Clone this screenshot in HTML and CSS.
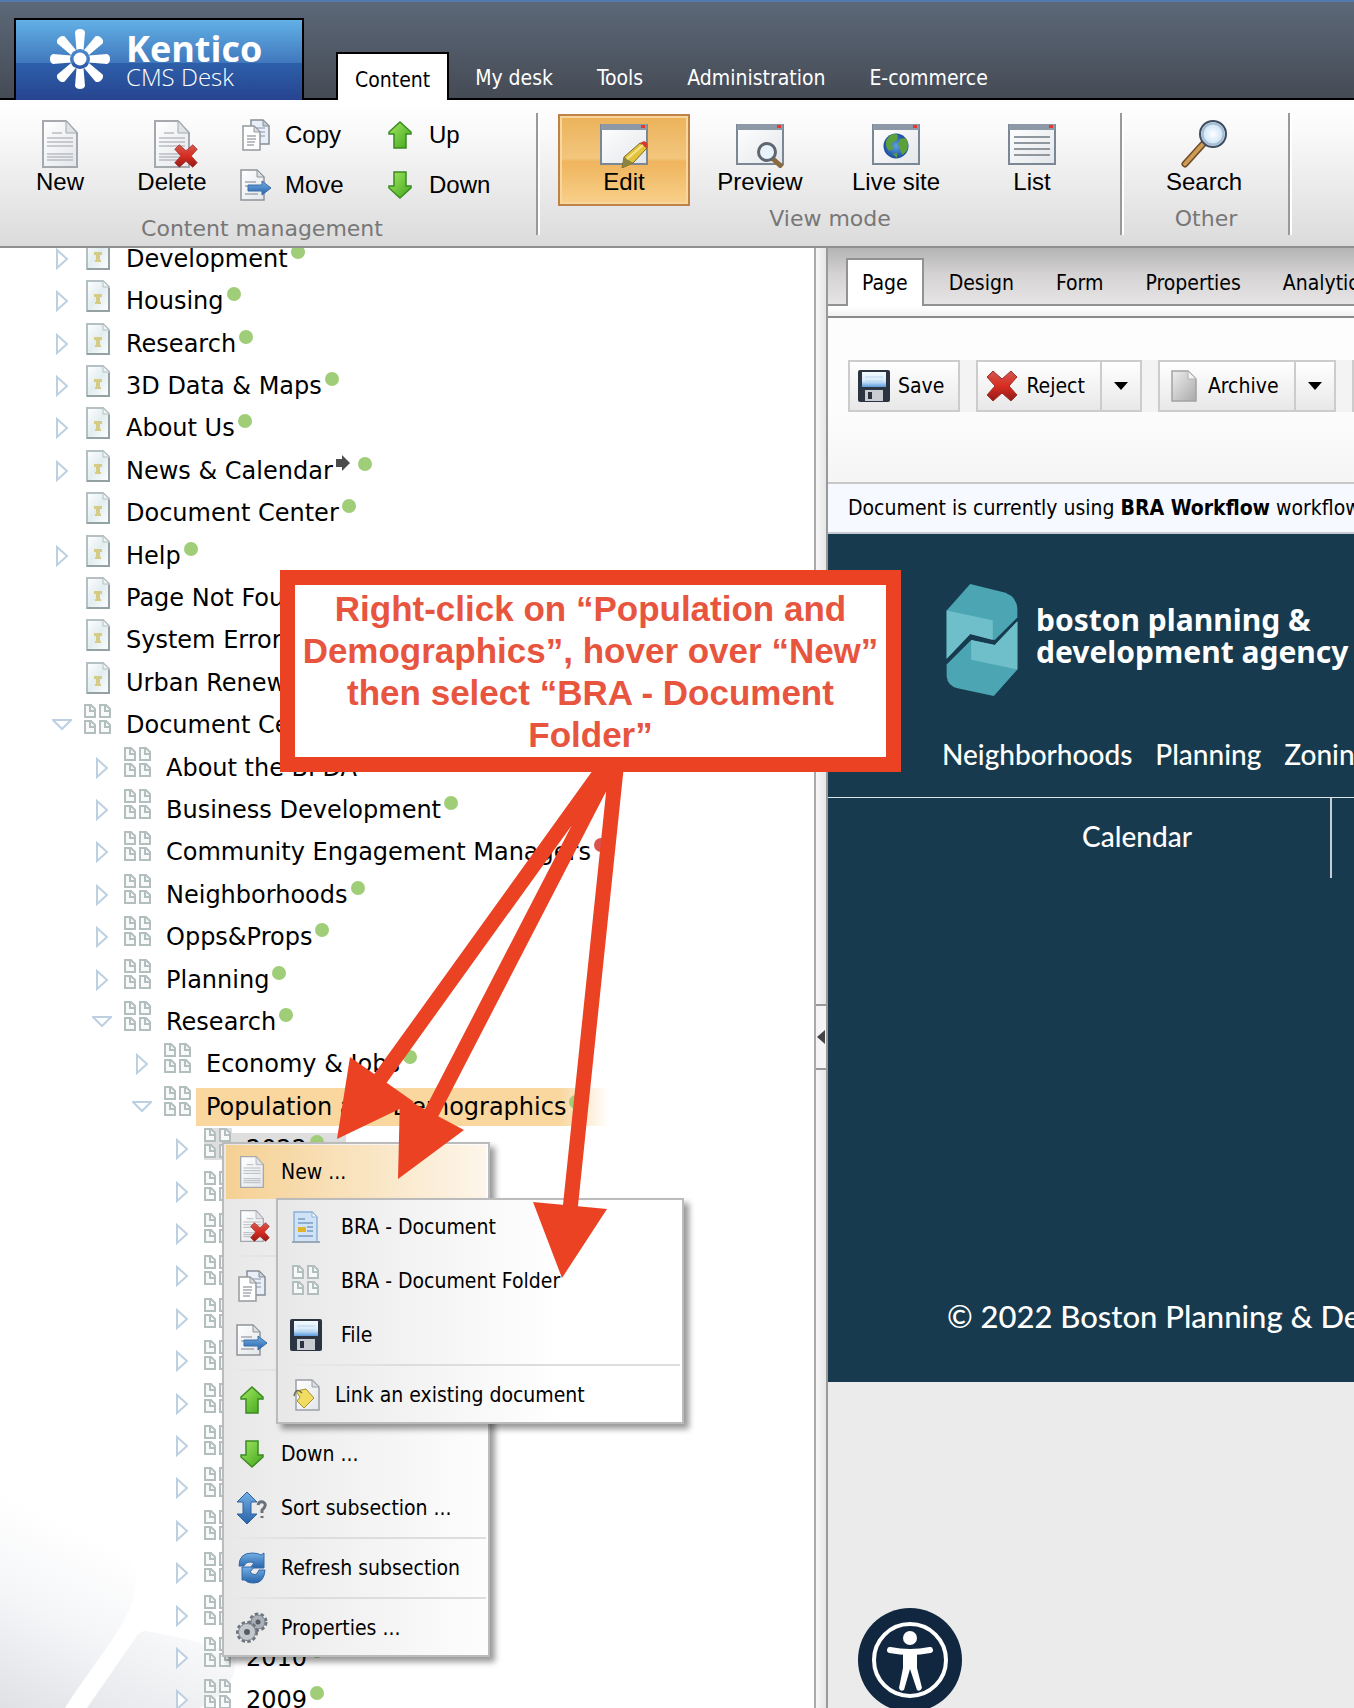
FILE: index.html
```html
<!DOCTYPE html>
<html lang="en">
<head>
<meta charset="utf-8">
<title>Kentico CMS Desk</title>
<link rel="stylesheet" href="styles.css">
</head>
<body>
<svg class="defs" width="0" height="0" aria-hidden="true">
  <defs>
    <linearGradient id="g-paper" x1="0" y1="0" x2="1" y2="1"><stop offset="0" stop-color="#fff"/><stop offset="1" stop-color="#e3e6ea"/></linearGradient>
    <linearGradient id="g-tpaper" x1="0" y1="0" x2="1" y2="1"><stop offset="0" stop-color="#fff"/><stop offset=".5" stop-color="#e2edf0"/><stop offset="1" stop-color="#fff"/></linearGradient>
    <linearGradient id="g-green" x1="0" y1="0" x2="1" y2="1"><stop offset="0" stop-color="#a4e860"/><stop offset="1" stop-color="#3fa51d"/></linearGradient>
    <linearGradient id="g-red" x1="0" y1="0" x2="0" y2="1"><stop offset="0" stop-color="#cf5a52"/><stop offset=".5" stop-color="#d92c20"/><stop offset="1" stop-color="#8f1c18"/></linearGradient>
    <linearGradient id="g-blue" x1="0" y1="0" x2="0" y2="1"><stop offset="0" stop-color="#74b0e6"/><stop offset="1" stop-color="#2763a8"/></linearGradient>
    <linearGradient id="g-disk" x1="0" y1="0" x2="0" y2="1"><stop offset="0" stop-color="#f4faff"/><stop offset=".6" stop-color="#d6eafc"/><stop offset="1" stop-color="#5b9bdc"/></linearGradient>
    <linearGradient id="g-grey" x1="0" y1="0" x2="1" y2="1"><stop offset="0" stop-color="#eee"/><stop offset="1" stop-color="#aaa"/></linearGradient>
    <radialGradient id="g-globe"><stop offset="0" stop-color="#5da0e6"/><stop offset="1" stop-color="#1c4c9c"/></radialGradient>
    <radialGradient id="g-lens"><stop offset="0" stop-color="#fff"/><stop offset="1" stop-color="#bcdcf6"/></radialGradient>
    <linearGradient id="g-swoop" x1="0.300" y1="0" x2="0" y2="1"><stop offset=".1" stop-color="#fff"/><stop offset=".5" stop-color="#f5f6f8"/><stop offset="1" stop-color="#dfe1e5"/></linearGradient>
    <linearGradient id="g-swoop2" x1="1" y1="0" x2="0" y2="1"><stop offset="0" stop-color="#fdfdfe"/><stop offset="1" stop-color="#e6e8eb"/></linearGradient>
  </defs>
  <symbol id="doc" viewBox="0 0 36 48">
    <path d="M1 1H24L35 13V47H1Z" fill="url(#g-paper)" stroke="#a5a9ae" stroke-width="2"/>
    <path d="M24 1V13H35Z" fill="#dfe2e6" stroke="#a5a9ae"/>
    <path d="M10 13H20M5 18H31M5 22H31M5 26H31M5 34H31M5 37H31M5 40H31" stroke="#b9bcc1" stroke-width="1.5"/>
  </symbol>
  <symbol id="cross" viewBox="0 0 32 32">
    <path d="M7 1L16 9L25 1L31 7L23 16L31 25L25 31L16 23L7 31L1 25L9 16L1 7Z" fill="url(#g-red)" stroke="#a03028"/>
  </symbol>
  <symbol id="copy" viewBox="0 0 28 32">
    <path d="M9 1H21L27 7V25H9Z" fill="#e9eff8" stroke="#878d95" stroke-width="1.5"/>
    <path d="M21 1V7H27Z" fill="#c8ced6" stroke="#878d95"/>
    <path d="M13 9H23M13 13H23M13 17H23" stroke="#aab4c2" stroke-width="1.5"/>
    <path d="M1 7H12L18 13V31H1Z" fill="#fff" stroke="#969a9f" stroke-width="1.5"/>
    <path d="M12 7V13H18Z" fill="#ddd" stroke="#969a9f"/>
    <path d="M5 17H14M5 20H14M5 23H13M5 26H12" stroke="#a5a9ae" stroke-width="1.3"/>
  </symbol>
  <symbol id="move" viewBox="0 0 32 32">
    <path d="M1 1H17L24 8V31H1Z" fill="url(#g-paper)" stroke="#8f9499" stroke-width="1.5"/>
    <path d="M17 1V8H24Z" fill="#ddd" stroke="#8f9499"/>
    <path d="M5 13H16M5 17H10M5 25H18" stroke="#a5a9ae" stroke-width="1.3"/>
    <path d="M8 16H22V12L31 19L22 26V22H8Z" fill="url(#g-blue)" stroke="#3a6ca8"/>
  </symbol>
  <symbol id="up" viewBox="0 0 24 28">
    <path d="M12 1L23 11V13H18V27H6V13H1V11Z" fill="url(#g-green)" stroke="#3b8a22" stroke-width="1.5"/>
  </symbol>
  <symbol id="down" viewBox="0 0 24 28">
    <path d="M12 27L23 17V15H18V1H6V15H1V17Z" fill="url(#g-green)" stroke="#3b8a22" stroke-width="1.5"/>
  </symbol>
  <symbol id="win" viewBox="0 0 48 48">
    <rect x="1" y="5" width="46" height="39" fill="url(#g-paper)" stroke="#7b8794" stroke-width="2"/>
    <path d="M1 4H47V10H1Z" fill="#8d99a6"/>
    <rect x="41" y="5" width="4" height="3" fill="#e03c32"/>
  </symbol>
  <symbol id="edit" viewBox="0 0 48 48">
    <use href="#win"/>
    <path d="M22 48L24 37L40 23L47 28L33 43Z" fill="#e3c23c" stroke="#7d6620"/>
    <path d="M40 23L44 21Q49 23 47 28Z" fill="#d5382c"/>
    <path d="M22 48L24 37L33 43Z" fill="#8a8440"/>
    <path d="M27 39L43 25" stroke="#f6e58c" stroke-width="2"/>
  </symbol>
  <symbol id="preview" viewBox="0 0 48 48">
    <use href="#win"/>
    <path d="M36 38L46 47" stroke="#8a6a3c" stroke-width="5"/>
    <circle cx="31" cy="32" r="8.500" fill="#e8f2fa" stroke="#5e6670" stroke-width="3"/>
  </symbol>
  <symbol id="live" viewBox="0 0 48 48">
    <use href="#win"/>
    <circle cx="24" cy="26" r="12.500" fill="url(#g-globe)"/>
    <path d="M15 19Q20 12 26 15L25 20L20 23L21 29L17 31Q12 25 15 19ZM28 19L34 18Q38 25 34 32L30 35L28 29L26 24ZM21 34L25 33L25 38Z" fill="#5ca03c"/>
  </symbol>
  <symbol id="list" viewBox="0 0 48 48">
    <use href="#win"/>
    <path d="M6 17H42M6 23H42M6 29H42M6 35H42" stroke="#8f989f" stroke-width="2"/>
  </symbol>
  <symbol id="search" viewBox="0 0 48 48">
    <path d="M5 44L24 23" stroke="#6b4a24" stroke-width="7" stroke-linecap="round"/>
    <path d="M5 44L23 24" stroke="#cf9a55" stroke-width="4" stroke-linecap="round"/>
    <circle cx="33" cy="14" r="13" fill="url(#g-lens)" stroke="#3d4c5e" stroke-width="2"/>
    <circle cx="33" cy="14" r="10.500" fill="none" stroke="#a9bccd" stroke-width="2"/>
  </symbol>
  <symbol id="tdoc" viewBox="0 0 24 32">
    <path d="M1 1H17L23 7V31H1Z" fill="url(#g-tpaper)" stroke="#b4c0c3" stroke-width="2"/>
    <path d="M1 31H23V8" fill="none" stroke="#95a2a4" stroke-width="2"/>
    <path d="M17 1V7H23Z" fill="#eef3f4" stroke="#b4c0c3"/>
    <path d="M8 14H16V17H14V22H15V24H9V22H10V17H8Z" fill="#d6cb84"/>
  </symbol>
  <symbol id="leaf" viewBox="0 0 12 14"><path d="M1 1H7L11 5V13H1Z" fill="#f8fafa" stroke="#b3bebe" stroke-width="2"/><path d="M6 1V7H11" fill="none" stroke="#b3bebe" stroke-width="2"/></symbol>
  <symbol id="folder" viewBox="0 0 28 32">
    <use href="#leaf" x="0" y="0" width="12" height="14"/><use href="#leaf" x="15" y="0" width="12" height="14"/>
    <use href="#leaf" x="0" y="16" width="12" height="14"/><use href="#leaf" x="15" y="16" width="12" height="14"/>
  </symbol>
  <symbol id="closed" viewBox="0 0 20 22"><path d="M5 2L15 11L5 20Z" fill="#fff" stroke="#bdd0e2" stroke-width="2"/></symbol>
  <symbol id="open" viewBox="0 0 20 22"><path d="M1 6H19L10 15Z" fill="#fff" stroke="#bdd0e2" stroke-width="2"/></symbol>
  <symbol id="disk" viewBox="0 0 32 32">
    <rect width="32" height="32" rx="2" fill="#2b3440"/><rect x="4" y="2" width="24" height="15" fill="url(#g-disk)"/>
    <path d="M7 7H25M7 11H25" stroke="#b8d4ec"/><rect x="7" y="20" width="18" height="11" fill="#c9cdd2"/><rect x="10" y="22" width="4" height="7" fill="#2b3440"/>
  </symbol>
  <symbol id="archive" viewBox="0 0 26 32"><path d="M1 1H17L25 9V31H1Z" fill="url(#g-grey)" stroke="#a2a2a2" stroke-width="1.500"/><path d="M17 1V9H25Z" fill="#f4f4f4" stroke="#b0b0b0"/></symbol>
  <symbol id="bdoc" viewBox="0 0 30 32">
    <path d="M3 1H21L26 6V31H3Z" fill="#cfe2f6" stroke="#8fb2d8" stroke-width="1.500"/><path d="M1 31H29" stroke="#9aa9b8" stroke-width="2"/>
    <path d="M7 8H14M7 12H22M16 16H22M16 20H22M7 25H22" stroke="#7a9cc2" stroke-width="1.500"/><rect x="7" y="16" width="8" height="5" fill="#dfb52a"/><path d="M21 1V6H26Z" fill="#fff" stroke="#8fb2d8"/>
  </symbol>
  <symbol id="link" viewBox="0 0 28 32">
    <path d="M4 1H20L27 8V31H4Z" fill="url(#g-paper)" stroke="#9aa0a8" stroke-width="1.500"/><path d="M20 1V8H27Z" fill="#ddd" stroke="#9aa0a8"/>
    <path d="M4 12L14 10L22 19L12 29L5 22L8 18Z" fill="#f1dc62" stroke="#a8902c"/><path d="M2 17Q4 8 10 14" fill="none" stroke="#6b6b55" stroke-width="1.500"/>
  </symbol>
  <symbol id="sort" viewBox="0 0 32 32">
    <path d="M11 0L21 10H15V22H21L11 32L1 22H7V10H1Z" fill="url(#g-blue)" stroke="#2f62a0"/>
    <path d="M22 13Q23 9 27 10Q31 12 28 16L26 18V21M26 24V26" fill="none" stroke="#6b7078" stroke-width="3"/>
  </symbol>
  <symbol id="refresh" viewBox="0 0 28 32">
    <path d="M1 14Q1 1 14 1Q20 1 23 3L26 1V16H12L16 11Q9 8 6 14Z" fill="url(#g-blue)" stroke="#3468a6"/>
    <path d="M27 18Q26 31 16 31Q9 31 7 28L4 28V15H16L12 20Q18 26 21 18Z" fill="url(#g-blue)" stroke="#3468a6"/>
  </symbol>
  <symbol id="gears" viewBox="0 0 32 32">
    <circle cx="22" cy="10" r="7" fill="#aab0b8" stroke="#6d747d" stroke-width="5" stroke-dasharray="3 2"/><circle cx="22" cy="10" r="7" fill="#aab0b8" stroke="#7c838c"/><circle cx="22" cy="10" r="2.500" fill="#565c64"/>
    <circle cx="11" cy="20" r="8.500" fill="#c2c7cd" stroke="#6d747d" stroke-width="5" stroke-dasharray="3 2"/><circle cx="11" cy="20" r="8.500" fill="#c2c7cd" stroke="#7c838c"/><circle cx="11" cy="20" r="3" fill="#565c64"/>
  </symbol>
  <symbol id="redirect" viewBox="0 0 14 16"><path d="M0 4H6V0L14 8L6 16V12H0Z" fill="#4c4c4c"/></symbol>
</svg>

<div class="desk">
<header class="top">
  <a class="brand" href="#">
    <svg class="star" viewBox="-30 -30 60 60" fill="#fff" aria-hidden="true">
      <g id="petals"><path id="petal" d="M-3.500 -9Q0 -11 3.500 -9L5 -27Q4 -30 0 -30Q-4 -30 -5 -27Z"/><use href="#petal" transform="rotate(45)"/><use href="#petal" transform="rotate(90)"/><use href="#petal" transform="rotate(135)"/></g>
      <use href="#petals" transform="rotate(180)"/><circle r="6.500"/>
    </svg>
    <span class="brand-text"><b>Kentico</b><span>CMS Desk</span></span>
  </a>
  <nav class="main-tabs">
    <a class="active" href="#">Content</a><a href="#">My desk</a><a href="#">Tools</a><a href="#">Administration</a><a href="#">E-commerce</a>
  </nav>
</header>

<div class="ribbon">
  <section class="group manage">
    <div class="tools">
      <button class="big narrow"><svg class="page"><use href="#doc"/></svg>New</button>
      <button class="big narrow"><span class="stack"><svg class="page"><use href="#doc"/></svg><svg class="badge"><use href="#cross"/></svg></span>Delete</button>
      <div class="small-col">
        <button class="small"><svg><use href="#copy"/></svg>Copy</button>
        <button class="small"><svg class="wide"><use href="#move"/></svg>Move</button>
      </div>
      <div class="small-col">
        <button class="small"><svg class="arr"><use href="#up"/></svg>Up</button>
        <button class="small"><svg class="arr"><use href="#down"/></svg>Down</button>
      </div>
    </div>
    <h2>Content management</h2>
  </section>
  <span class="sep"></span>
  <section class="group view">
    <div class="tools">
      <button class="big on"><svg><use href="#edit"/></svg>Edit</button>
      <button class="big"><svg><use href="#preview"/></svg>Preview</button>
      <button class="big"><svg><use href="#live"/></svg>Live site</button>
      <button class="big"><svg><use href="#list"/></svg>List</button>
    </div>
    <h2>View mode</h2>
  </section>
  <span class="sep"></span>
  <section class="group other">
    <div class="tools"><button class="big"><svg><use href="#search"/></svg>Search</button></div>
    <h2>Other</h2>
  </section>
  <span class="sep"></span>
</div>

<main class="work">
  <aside class="tree-pane">
    <svg class="swoop" viewBox="0 0 240 220" aria-hidden="true">
      <path d="M0 0C70 5 136 40 136 92C136 130 100 165 65 220H0Z" fill="url(#g-swoop)"/>
      <path d="M145 143Q139 143 134 152L87 220H200Q240 200 235 165Q190 150 145 143Z" fill="url(#g-swoop2)"/>
    </svg>
    <ul class="tree">
      <li><svg class="tw"><use href="#closed"/></svg><svg class="ic"><use href="#tdoc"/></svg><a href="#">Development<i></i></a></li>
      <li><svg class="tw"><use href="#closed"/></svg><svg class="ic"><use href="#tdoc"/></svg><a href="#">Housing<i></i></a></li>
      <li><svg class="tw"><use href="#closed"/></svg><svg class="ic"><use href="#tdoc"/></svg><a href="#">Research<i></i></a></li>
      <li><svg class="tw"><use href="#closed"/></svg><svg class="ic"><use href="#tdoc"/></svg><a href="#">3D Data &amp; Maps<i></i></a></li>
      <li><svg class="tw"><use href="#closed"/></svg><svg class="ic"><use href="#tdoc"/></svg><a href="#">About Us<i></i></a></li>
      <li><svg class="tw"><use href="#closed"/></svg><svg class="ic"><use href="#tdoc"/></svg><a href="#">News &amp; Calendar<svg class="redir"><use href="#redirect"/></svg><i></i></a></li>
      <li><svg class="tw"></svg><svg class="ic"><use href="#tdoc"/></svg><a href="#">Document Center<i></i></a></li>
      <li><svg class="tw"><use href="#closed"/></svg><svg class="ic"><use href="#tdoc"/></svg><a href="#">Help<i></i></a></li>
      <li><svg class="tw"></svg><svg class="ic"><use href="#tdoc"/></svg><a href="#">Page Not Found</a></li>
      <li><svg class="tw"></svg><svg class="ic"><use href="#tdoc"/></svg><a href="#">System Error</a></li>
      <li><svg class="tw"></svg><svg class="ic"><use href="#tdoc"/></svg><a href="#">Urban Renewal</a></li>
      <li><svg class="tw"><use href="#open"/></svg><svg class="ic"><use href="#folder"/></svg><a href="#">Document Center</a></li>
      <li class="l2"><svg class="tw"><use href="#closed"/></svg><svg class="ic"><use href="#folder"/></svg><a href="#">About the BPDA</a></li>
      <li class="l2"><svg class="tw"><use href="#closed"/></svg><svg class="ic"><use href="#folder"/></svg><a href="#">Business Development<i></i></a></li>
      <li class="l2"><svg class="tw"><use href="#closed"/></svg><svg class="ic"><use href="#folder"/></svg><a href="#">Community Engagement Managers<i class="red"></i></a></li>
      <li class="l2"><svg class="tw"><use href="#closed"/></svg><svg class="ic"><use href="#folder"/></svg><a href="#">Neighborhoods<i></i></a></li>
      <li class="l2"><svg class="tw"><use href="#closed"/></svg><svg class="ic"><use href="#folder"/></svg><a href="#">Opps&amp;Props<i></i></a></li>
      <li class="l2"><svg class="tw"><use href="#closed"/></svg><svg class="ic"><use href="#folder"/></svg><a href="#">Planning<i></i></a></li>
      <li class="l2"><svg class="tw"><use href="#open"/></svg><svg class="ic"><use href="#folder"/></svg><a href="#">Research<i></i></a></li>
      <li class="l3"><svg class="tw"><use href="#closed"/></svg><svg class="ic"><use href="#folder"/></svg><a href="#">Economy &amp; Jobs<i></i></a></li>
      <li class="l3 selected"><svg class="tw"><use href="#open"/></svg><svg class="ic"><use href="#folder"/></svg><a href="#">Population and Demographics<i></i></a></li>
      <li class="l4 hover"><svg class="tw"><use href="#closed"/></svg><svg class="ic"><use href="#folder"/></svg><a href="#">2022<i></i></a></li>
      <li class="l4"><svg class="tw"><use href="#closed"/></svg><svg class="ic"><use href="#folder"/></svg><a href="#">2021<i></i></a></li>
      <li class="l4"><svg class="tw"><use href="#closed"/></svg><svg class="ic"><use href="#folder"/></svg><a href="#">2020<i></i></a></li>
      <li class="l4"><svg class="tw"><use href="#closed"/></svg><svg class="ic"><use href="#folder"/></svg><a href="#">2019<i></i></a></li>
      <li class="l4"><svg class="tw"><use href="#closed"/></svg><svg class="ic"><use href="#folder"/></svg><a href="#">2018<i></i></a></li>
      <li class="l4"><svg class="tw"><use href="#closed"/></svg><svg class="ic"><use href="#folder"/></svg><a href="#">2017<i></i></a></li>
      <li class="l4"><svg class="tw"><use href="#closed"/></svg><svg class="ic"><use href="#folder"/></svg><a href="#">2016<i></i></a></li>
      <li class="l4"><svg class="tw"><use href="#closed"/></svg><svg class="ic"><use href="#folder"/></svg><a href="#">2015<i></i></a></li>
      <li class="l4"><svg class="tw"><use href="#closed"/></svg><svg class="ic"><use href="#folder"/></svg><a href="#">2014<i></i></a></li>
      <li class="l4"><svg class="tw"><use href="#closed"/></svg><svg class="ic"><use href="#folder"/></svg><a href="#">2013<i></i></a></li>
      <li class="l4"><svg class="tw"><use href="#closed"/></svg><svg class="ic"><use href="#folder"/></svg><a href="#">2012<i></i></a></li>
      <li class="l4"><svg class="tw"><use href="#closed"/></svg><svg class="ic"><use href="#folder"/></svg><a href="#">2011<i></i></a></li>
      <li class="l4"><svg class="tw"><use href="#closed"/></svg><svg class="ic"><use href="#folder"/></svg><a href="#">2010<i></i></a></li>
      <li class="l4"><svg class="tw"><use href="#closed"/></svg><svg class="ic"><use href="#folder"/></svg><a href="#">2009<i></i></a></li>
    </ul>
  </aside>
  <div class="splitter"><button aria-label="Collapse tree"><svg viewBox="0 0 8 14"><path d="M8 0V14L0 7Z" fill="#444"/></svg></button></div>
  <section class="editor">
    <nav class="doc-tabs"><a class="active" href="#">Page</a><a href="#">Design</a><a href="#">Form</a><a href="#">Properties</a><a href="#">Analytics</a></nav>
    <div class="strip"></div>
    <div class="actions">
      <div class="action-row">
        <button class="act save"><svg><use href="#disk"/></svg>Save</button>
        <div class="split"><button class="act"><svg><use href="#cross"/></svg>Reject</button><button class="more" aria-label="Reject options"></button></div>
        <div class="split"><button class="act"><svg><use href="#archive"/></svg>Archive</button><button class="more arch" aria-label="Archive options"></button></div>
        <button class="act next" aria-label="More actions"></button>
      </div>
    </div>
    <p class="info">Document is currently using <b>BRA Workflow</b> workflow.</p>
    <div class="site">
      <header class="site-head">
        <a class="bpda" href="#">
          <svg viewBox="0 0 72 114" aria-hidden="true">
            <path d="M24 0L60 9Q72 14 72 26V34L49 57L24 51L0 76V27Z" fill="#4ba5b3"/>
            <path d="M0 27L47 37V57L24 51L0 76Z" fill="#6fbfca"/>
            <path d="M72 38L49 62L25 57L0 82V94Q1 104 11 106L48 114L72 87Z" fill="#4ba5b3"/>
            <path d="M72 38L49 62L25 57V77L72 87Z" fill="#6fbfca"/>
          </svg>
          <span>boston planning &amp;<br>development agency</span>
        </a>
        <nav class="site-nav"><a href="#">Neighborhoods</a><a href="#">Planning</a><a href="#">Zoning</a></nav>
      </header>
      <nav class="site-sub"><a href="#">Calendar</a><a href="#"></a></nav>
      <footer>© 2022 Boston Planning &amp; Development Agency</footer>
    </div>
    <button class="a11y" aria-label="Accessibility menu">
      <svg viewBox="0 0 104 104" fill="none" stroke="#fff"><circle cx="52" cy="52" r="36" stroke-width="4"/><circle cx="52" cy="30" r="7" fill="#fff" stroke="none"/><path d="M32 42Q52 46 72 42" stroke-width="6" stroke-linecap="round"/><path d="M45 43H59V60L64 80Q62 84 59 82L52 61L46 82Q42 84 41 80L45 60Z" fill="#fff" stroke="none"/></svg>
    </button>
  </section>
</main>

<div class="menu context" role="menu">
  <button class="item hot" role="menuitem"><svg class="p"><use href="#doc"/></svg>New ...</button>
  <button class="item" role="menuitem"><span class="stack mini"><svg class="p"><use href="#doc"/></svg><svg class="badge"><use href="#cross"/></svg></span>Delete</button>
  <hr>
  <button class="item" role="menuitem"><svg><use href="#copy"/></svg>Copy ...</button>
  <button class="item" role="menuitem"><svg><use href="#move"/></svg>Move ...</button>
  <hr>
  <button class="item" role="menuitem"><svg class="a"><use href="#up"/></svg>Up ...</button>
  <button class="item" role="menuitem"><svg class="a"><use href="#down"/></svg>Down ...</button>
  <button class="item" role="menuitem"><svg><use href="#sort"/></svg>Sort subsection ...</button>
  <hr>
  <button class="item" role="menuitem"><svg><use href="#refresh"/></svg>Refresh subsection</button>
  <hr>
  <button class="item" role="menuitem"><svg><use href="#gears"/></svg>Properties ...</button>
</div>
<div class="menu sub" role="menu">
  <button class="item" role="menuitem"><svg><use href="#bdoc"/></svg>BRA - Document</button>
  <button class="item" role="menuitem"><svg><use href="#folder"/></svg>BRA - Document Folder</button>
  <button class="item" role="menuitem"><svg><use href="#disk"/></svg>File</button>
  <hr>
  <button class="item tight" role="menuitem"><svg><use href="#link"/></svg>Link an existing document</button>
</div>

<svg class="arrows" width="420" height="560" viewBox="280 740 420 560" aria-hidden="true">
  <g stroke="#eb4224" stroke-width="15"><path d="M608 762L380 1079M616 756L431 1114M617 760L570 1210"/></g>
  <path d="M337 1139L350 1057L414 1102ZM398 1179L400 1096L464 1130ZM562 1278L533 1202L607 1209Z" fill="#eb4224"/>
</svg>
<p class="callout">Right-click on “Population and Demographics”, hover over “New” then select “BRA - Document Folder”</p>
</div>
</body>
</html>
```
FILE: styles.css
```css
* { box-sizing: border-box; }
body { margin: 0; background: #fff; color: #000; font: 21px "DejaVu Sans Condensed", "DejaVu Sans", sans-serif; }
a { color: inherit; text-decoration: none; }
button { margin: 0; padding: 0; border: 0; background: none; color: inherit; font: inherit; }
p, h2 { margin: 0; }
svg { display: block; flex: none; }
.defs { position: absolute; }
.desk { position: relative; display: flex; flex-direction: column; height: 100vh; overflow: hidden; }

/* Header */
.top { display: flex; align-items: flex-end; height: 100px; padding-left: 14px; border-top: 2px solid #5379ad; background: linear-gradient(#5c6878, #454b55 96px, #000 96px); }
.brand { display: flex; gap: 16px; width: 290px; height: 82px; padding: 9px 0 0 34px; border: 2px solid #000; border-bottom: 0; color: #fff; font-family: "Open Sans", "Noto Sans", sans-serif;
  background: linear-gradient(#62b0e6, #4078bd 43px, #2d5fa9 43px, #27438f 81px); }
.star { width: 60px; height: 60px; }
.brand-text { display: flex; flex-direction: column; }
.brand-text b { font-size: 36px; line-height: 40px; }
.brand-text span { font-size: 24px; line-height: 16px; font-weight: 300; }
.main-tabs { display: flex; align-items: flex-end; margin-left: 32px; color: #fff; }
.main-tabs a { height: 44px; padding: 0 22px; line-height: 44px; }
.main-tabs .active { height: 48px; margin-right: 4px; padding: 0 17px; border: 2px solid #000; border-bottom: 0; background: #fff; color: #000; line-height: 52px; }

/* Ribbon */
.ribbon { display: flex; flex: none; border-bottom: 2px solid #8f8f8f; background: linear-gradient(#fff, #fafafa 20%, #dbdbdb); }
.group { padding: 14px 0 6px; font-family: "Liberation Sans", Arial, sans-serif; font-size: 24px; }
.group h2 { margin-top: 2px; color: #777; font: 22px/22px "DejaVu Sans", sans-serif; text-align: center; }
.manage { width: 536px; }
.manage h2 { margin-top: 12px; padding-right: 12px; }
.view { width: 580px; }
.other { width: 164px; }
.tools { display: flex; justify-content: center; gap: 4px; height: 92px; padding-right: 4px; }
.manage .tools { justify-content: flex-start; gap: 0; padding: 0 0 0 4px; }
.sep { width: 4px; margin: 13px 0 11px; border-left: 2px solid #999; border-right: 2px solid #fff; }
.big { display: flex; flex-direction: column; align-items: center; gap: 2px; width: 132px; height: 92px; padding-top: 4px; border: 2px solid transparent; line-height: 24px; }
.big > svg { width: 48px; height: 48px; }
.big > .page, .stack .page { width: 36px; height: 48px; }
.narrow { width: 112px; }
.on { border-color: #bf8347; background: linear-gradient(#ecb25a, #f2c67d 48%, #efb45c 52%, #f8d08b); box-shadow: inset 0 0 0 2px #f8d69c; }
.stack { position: relative; display: block; width: 36px; height: 48px; }
.stack .badge { position: absolute; right: -8px; bottom: 0; width: 24px; height: 24px; }
.small-col { display: flex; flex-direction: column; gap: 8px; width: 144px; margin-left: 14px; }
.small-col + .small-col { margin-left: 0; }
.small { display: flex; align-items: center; gap: 15px; height: 42px; }
.small svg { width: 28px; height: 32px; }
.small .wide { width: 32px; margin: 0 -2px; }
.small .arr { height: 28px; }

/* Work area */
.work { display: flex; flex: 1; min-height: 0; }
.tree-pane { position: relative; flex: 0 0 60.12%; overflow: hidden; }
.swoop { position: absolute; left: 0; bottom: 0; width: 240px; height: 220px; }
.tree { position: relative; display: grid; grid-auto-rows: 42px 43px 42px 42px 43px; margin: -10px 0 0; padding: 0; list-style: none; font: 24px/42px "DejaVu Sans", sans-serif; white-space: nowrap; }
.tree li { display: flex; align-items: flex-start; padding-left: 52px; }
.tree .l2 { padding-left: 92px; }
.tree .l3 { padding-left: 132px; }
.tree .l4 { padding-left: 172px; }
.tw { width: 20px; height: 22px; margin: 10px 12px 0 0; }
.ic { width: 28px; height: 32px; margin-right: 4px; }
.tree a { display: flex; padding-left: 10px; }
.tree i { width: 14px; height: 14px; margin: 7px 0 0 3px; border-radius: 50%; background: #a0cd78; }
.tree .red { background: #d9534f; }
.redir { width: 14px; height: 16px; margin: 5px 5px 0 3px; }
.selected a { height: 38px; margin-top: 2px; padding-right: 26px; line-height: 38px; background: linear-gradient(90deg, #f9d79f 88%, transparent); }
.hover .ic { background: #dedede; }
.hover a { height: 32px; margin: 5px 0 0 -4px; padding: 0 22px 0 14px; line-height: 32px; background: #dedede; }
.hover i { margin-top: 2px; }
.splitter { display: flex; align-items: center; flex: 0 0 14px; border: solid #999; border-width: 0 2px 0 2px; border-left-color: #aaa; background: linear-gradient(90deg, #f6f6f6, #e6e6e6); }
.splitter button { display: flex; align-items: center; justify-content: center; width: 10px; height: 66px; margin-top: 118px; border: solid #999; border-width: 2px 0; background: #f4f4f4; }
.splitter svg { width: 8px; height: 14px; }

/* Editor */
.editor { position: relative; display: flex; flex-direction: column; flex: 1; min-width: 0; overflow: hidden; background: #ebebeb; white-space: nowrap; }
.doc-tabs { display: flex; align-items: flex-end; flex: none; height: 58px; padding-left: 18px; background: linear-gradient(#b4b4b4, #d4d2d2 45%, #e6e4e4 56px, #929292 56px); }
.doc-tabs a { padding: 0 21px; line-height: 38px; height: 42px; }
.doc-tabs .active { height: 48px; margin-right: 4px; padding: 0 14px; border: 2px solid #929292; border-bottom: 0; background: #fff; line-height: 46px; }
.strip { flex: none; height: 12px; border-bottom: 2px solid #8a8a8a; background: linear-gradient(#fff, #f2f2f2); }
.actions { flex: none; padding: 42px 0 70px 20px; border-bottom: 2px solid #c8c8c8; background: linear-gradient(#fdfdfd 50%, #f5f5f5); }
.action-row { display: flex; gap: 16px; background: #f3f3f3; }
.act, .more { display: flex; align-items: center; height: 52px; border: 2px solid #ccc; background: linear-gradient(#fff, #e8e8e8); }
.act { gap: 8px; padding: 0 14px 0 8px; }
.act svg { width: 32px; height: 32px; }
.split { display: flex; }
.split .act { padding-right: 15px; }
.more { justify-content: center; width: 42px; margin-left: -2px; }
.more::before { content: ""; border: 7px solid transparent; border-top: 8px solid #000; border-bottom: 0; }
.next { width: 60px; flex: none; }
.info { flex: none; height: 50px; padding-left: 20px; border-bottom: 2px solid #c5ccd3; background: #f6f9ff; line-height: 48px; }
.site { display: flex; flex-direction: column; flex: none; height: 848px; background: #173a4e; color: #fff; font-family: Lato, "Noto Sans", sans-serif; font-size: 28px; font-weight: 500; }
.site-head { padding: 50px 0 0 114px; border-bottom: 1px solid #dfe6ea; }
.bpda { display: flex; gap: 18px; margin-left: 4px; font: 700 30px/32px "Noto Sans", sans-serif; }
.bpda svg { width: 72px; height: 112px; }
.bpda span { padding-top: 20px; }
.site-nav { display: flex; gap: 23px; margin-top: 38px; padding-bottom: 23px; line-height: 40px; }
.site-sub { display: flex; line-height: 76px; }
.site-sub a:first-child { width: 504px; height: 80px; padding-left: 116px; border-right: 2px solid #c5ced3; text-align: center; }
footer { margin-top: auto; padding: 0 0 44px 119px; font-size: 31px; line-height: 44px; }
.a11y { position: absolute; left: 30px; bottom: -4px; width: 104px; height: 104px; border-radius: 50%; background: #11263f; }

/* Context menus */
.menu { position: absolute; border: 2px solid #bbb; background: linear-gradient(90deg, #e8e8e8, #fdfdfd); box-shadow: 5px 5px 6px rgba(0, 0, 0, .4); white-space: nowrap; }
.context { left: 222px; top: 1142px; width: 268px; padding: 1px 2px 0; }
.sub { left: 276px; top: 1198px; width: 408px; padding: 0 2px; background: linear-gradient(90deg, #e8e8e8, #fff 70%); }
.item { display: flex; align-items: center; gap: 13px; width: 100%; height: 54px; padding-left: 10px; }
.item svg { width: 32px; height: 32px; }
.item .a { height: 28px; }
.hot { background: linear-gradient(90deg, #f5d093, #fdf6ea); }
.mini { width: 32px; height: 32px; }
.mini .p { width: 32px; height: 32px; }
.mini .badge { right: -2px; width: 20px; height: 20px; }
.sub .item { gap: 19px; }
.sub .tight { gap: 13px; }
.menu hr { height: 2px; margin: 2px 0; border: 0; background: linear-gradient(90deg, transparent, #ddd 30%); }

/* Annotation */
.arrows { position: absolute; left: 280px; top: 740px; }
.callout { position: absolute; left: 280px; top: 570px; width: 621px; height: 202px; padding: 3px 0 0; border: 15px solid #eb4224; background: #fff; color: #e8553f; font: bold 35px/42px "Liberation Sans", Arial, sans-serif; text-align: center; }
```
